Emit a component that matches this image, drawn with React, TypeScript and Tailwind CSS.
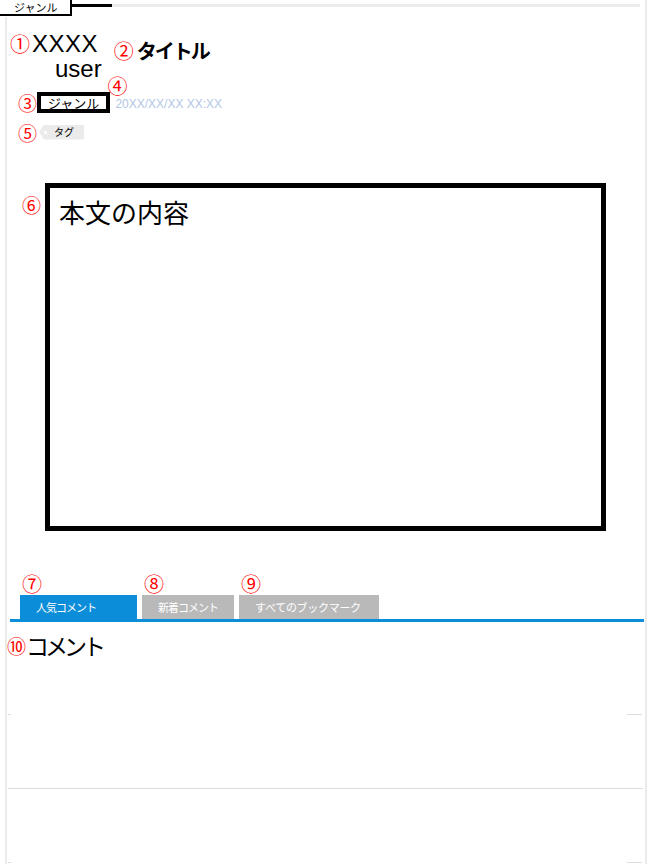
const jp = "font-['Noto_Sans_CJK_JP','Liberation_Sans',sans-serif]";
const lat = "font-['Liberation_Sans','Noto_Sans_CJK_JP',sans-serif]";

function Num({ n, size = "text-[19px]" }: { n: string; size?: string }) {
    return <span className={`${jp} ${size} leading-none text-[#ff0000] shrink-0`}>{n}</span>;
}

function Separator({ full }: { full?: boolean }) {
    if (full) {
        return <div className="ml-[1px] mr-[2px] h-[1px] bg-[#dcdcdc]" />;
    }
    return (
        <div className="flex justify-between ml-[1px] mr-[3px] h-[1px]">
            <div className="w-[3px] bg-[#dcdcdc]" />
            <div className="w-[15px] bg-[#dcdcdc]" />
        </div>
    );
}

export default function App() {
    const tabs = [
        { num: "⑦", label: "人気コメント", w: "w-[117px]", bg: "bg-[#0b8dd9]", track: "tracking-[-1px]", ml: "" },
        { num: "⑧", label: "新着コメント", w: "w-[92px]", bg: "bg-[#b9b9b9]", track: "tracking-[-1px]", ml: "ml-[5px]" },
        { num: "⑨", label: "すべてのブックマーク", w: "w-[140px]", bg: "bg-[#b9b9b9]", track: "tracking-[-0.3px]", ml: "ml-[5px]" },
    ];

    return (
        <div className={`w-[650px] h-[864px] bg-white overflow-hidden text-black ${lat}`}>
            <div className="w-[647px] h-[864px] border-r-2 border-[#ebebeb]">
                {/* header tab */}
                <div className="flex h-[17px]">
                    <div className={`${jp} w-[72px] h-[16px] border-r-2 border-b-2 border-black text-[11px] leading-[14px] pl-[14px]`}>
                        ジャンル
                    </div>
                    <div className="mt-[4px] h-[3px] w-[40px] bg-black" />
                    <div className="mt-[4px] h-[3px] w-[528px] bg-[#ebebeb]" />
                </div>

                {/* body */}
                <div className="ml-[5px] h-[847px] border-l-2 border-[#ebebeb]">
                    {/* user + title */}
                    <div className="flex pt-[14px] pl-[3px]">
                        <div>
                            <div className="flex items-center h-[25px]">
                                <Num n="①" size="text-[20px]" />
                                <span className="ml-[2px] text-[24px] leading-[25px] tracking-[0.5px]">XXXX</span>
                            </div>
                            <div className="pl-[45px] text-[24px] leading-[25px]">user</div>
                        </div>
                        <div className="ml-[12px] mt-[10px] flex items-center h-[20px]">
                            <Num n="②" size="text-[20px]" />
                            <span className={`${jp} ml-[3px] text-[20px] leading-[20px] font-bold tracking-[-2px]`}>タイトル</span>
                        </div>
                    </div>

                    {/* genre + date */}
                    <div className="flex items-center mt-[11px] pl-[11px] h-[21px]">
                        <Num n="③" />
                        <div className={`${jp} flex items-center h-[21px] border-4 border-black px-[7px] text-[13px] leading-[13px]`}>
                            ジャンル
                        </div>
                        <div className="relative ml-[5px]">
                            <span className={`${jp} absolute left-[-8px] top-[-15px] text-[20px] leading-[20px] text-[#ff0000]`}>④</span>
                            <span className="text-[12px] leading-[14px] text-[#b3c6e6]">20XX/XX/XX XX:XX</span>
                        </div>
                    </div>

                    {/* tag */}
                    <div className="flex items-center mt-[9px] pl-[11px] h-[20px]">
                        <Num n="⑤" />
                        <div className="ml-[2px] flex items-center h-[15px] bg-[#ebebeb] pl-[5px] pr-[10px] [clip-path:polygon(5px_0,100%_0,100%_100%,5px_100%,0_50%)]">
                            <span className="w-[3px] h-[3px] rounded-full bg-white" />
                            <span className={`${jp} ml-[7px] text-[10px] leading-[10px]`}>タグ</span>
                        </div>
                    </div>

                    {/* content */}
                    <div className="flex items-start mt-[41px] pl-[15px]">
                        <div className="mt-[12px]">
                            <Num n="⑥" />
                        </div>
                        <div className="ml-[4px] w-[561px] h-[348px] border-[5px] border-black pl-[9px] pt-[9px]">
                            <div className={`${jp} text-[26px] leading-[30px]`}>本文の内容</div>
                        </div>
                    </div>

                    {/* tabs */}
                    <div className="flex items-end mt-[41px] pl-[13px]">
                        {tabs.map((t) => (
                            <div key={t.num} className={`flex flex-col ${t.ml}`}>
                                <div className="pl-[2px] h-[23px] flex items-center">
                                    <Num n={t.num} size="text-[20px]" />
                                </div>
                                <div className={`${jp} ${t.w} ${t.bg} ${t.track} h-[24px] pl-[16px] text-[11px] leading-[24px] text-white`}>
                                    {t.label}
                                </div>
                            </div>
                        ))}
                    </div>
                    <div className="ml-[3px] mr-[1px] h-[3px] bg-[#0b8dd9]" />

                    {/* comments */}
                    <div className="flex items-center mt-[10px] h-[26px]">
                        <Num n="⑩" />
                        <span className={`${jp} text-[23px] leading-[26px] tracking-[-4px]`}>コメント</span>
                    </div>
                    <div className="h-[56px]" />
                    <Separator />
                    <div className="h-[73px]" />
                    <Separator full />
                    <div className="h-[73px]" />
                    <Separator />
                </div>
            </div>
        </div>
    );
}
